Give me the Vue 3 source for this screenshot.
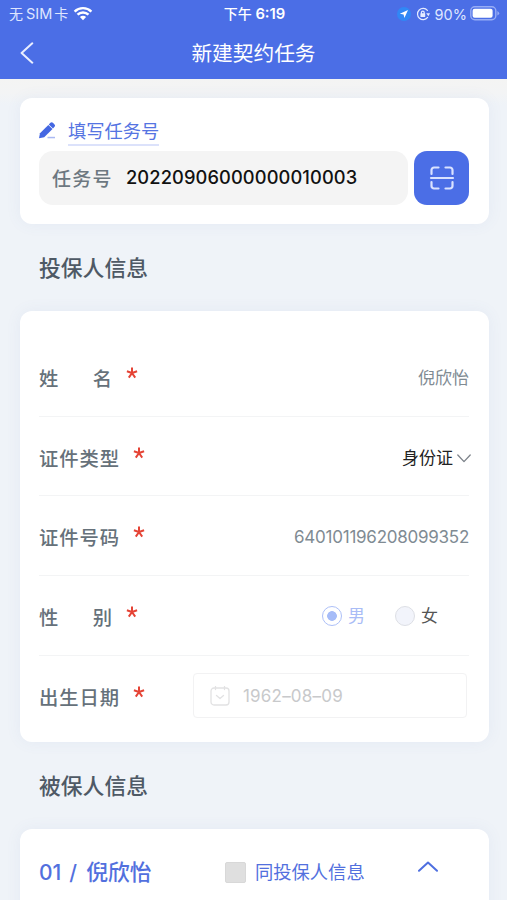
<template>
   <div class="page">
      <header class="header">
         <div class="status-bar">
            <div class="status-left">
               <span class="carrier">无<span class="sim">SIM</span>卡</span>
               <svg class="wifi" viewBox="0 0 20 15">
                  <path d="M1.6 5.6a12 12 0 0 1 16.8 0" />
                  <path d="M4.5 8.7a7.8 7.8 0 0 1 11 0" />
                  <path class="wifi-dot" d="M10 14.2 6.9 11.1a4.4 4.4 0 0 1 6.2 0z" />
               </svg>
            </div>
            <div class="status-time">下午 <span class="clock">6:19</span></div>
            <div class="status-right">
               <svg class="location" viewBox="0 0 14 14">
                  <circle cx="7" cy="7" r="7" />
                  <path d="M11 3 2.9 6.7l3.7.7.8 3.7z" />
               </svg>
               <svg class="lock" viewBox="0 0 14 14">
                  <path class="ring" d="M11.4 3.4a5.6 5.6 0 1 0 .2 7" />
                  <path d="M10.2 6.2h3.8l-1.6 3z" />
                  <rect x="4.4" y="6.2" width="4.8" height="3.8" rx=".6" />
                  <path class="ring" d="M5.4 6.5v-1a1.4 1.4 0 0 1 2.8 0v1" />
               </svg>
               <span class="percent">90%</span>
               <svg class="battery" viewBox="0 0 30 15">
                  <rect class="case" x=".8" y=".8" width="25" height="13" rx="4" />
                  <rect class="level" x="2.6" y="2.8" width="20" height="9" rx="2" />
                  <path class="tip" d="M27.4 5q3.6 2.3 0 4.6z" />
               </svg>
            </div>
         </div>
         <div class="nav-bar">
            <svg class="back" viewBox="0 0 14 22">
               <path d="M12.3 1.3 1.6 11l10.7 9.7" />
            </svg>
            <h1 class="nav-title">新建契约任务</h1>
         </div>
      </header>

      <main class="content">
         <section class="card task-card">
            <div class="task-link">
               <svg class="pencil" viewBox="0 0 17 17">
                  <path d="M0 16.3 1 11.2 9.3 2.9l4.2 4.2-8.3 8.2z" />
                  <path d="m9.8 2.4 1.6-1.6c.8-.8 1.7-.8 2.5 0l1.6 1.6c.7.7.7 1.6 0 2.3L14 6.500z" />
                  <rect class="pencil-line" x="8.5" y="14.8" width="7.5" height="1.5" />
               </svg>
               <span class="task-link-text">填写任务号</span>
            </div>
            <div class="task-row">
               <div class="task-input">
                  <span class="task-label">任务号</span>
                  <span class="task-value">{{ taskNo }}</span>
               </div>
               <button class="scan" type="button">
                  <svg viewBox="0 0 26 26">
                     <path d="M2.5 9V5A2.5 2.5 0 0 1 5 2.5h4.5M16.500 2.5H21A2.5 2.5 0 0 1 23.5 5v4" />
                     <path d="M2.5 17v4A2.5 2.5 0 0 0 5 23.5h4.5M16.500 23.5H21a2.5 2.5 0 0 0 2.5-2.5v-4" />
                     <path d="M2 13h22" />
                  </svg>
               </button>
            </div>
         </section>

         <h2 class="section-title">投保人信息</h2>

         <section class="card form-card">
            <div v-for="item in fields" :key="item.key" class="form-row">
               <div class="form-label" :class="{ spread: item.label.length === 2 }">
                  <span v-for="char in item.label" :key="char">{{ char }}</span>
               </div>
               <svg class="required" viewBox="0 0 12 12">
                  <path d="M6 6V.6M6 6 .9 4.3M6 6l5.1-1.7M6 6l-3.2 4.6M6 6l3.2 4.6" />
               </svg>

               <div v-if="item.type === 'text'" class="form-value" :class="item.key">{{ item.value }}</div>

               <div v-else-if="item.type === 'select'" class="form-select">
                  {{ item.value }}
                  <svg viewBox="0 0 14 9">
                     <path d="m.8 1 6.2 6.6L13.2 1" />
                  </svg>
               </div>

               <div v-else-if="item.type === 'radio'" class="form-radios">
                  <label
                     v-for="option in item.options"
                     :key="option"
                     class="radio"
                     :class="{ checked: option === item.value }"
                  >
                     <span class="radio-icon"></span>{{ option }}
                  </label>
               </div>

               <div v-else class="form-date">
                  <svg viewBox="0 0 20 20">
                     <rect x="1" y="2" width="18" height="17" rx="3" />
                     <path d="M5.5.5v3M14.5.5v3M6.5 9.5l3.5 3 3.5-3" />
                  </svg>
                  <span>{{ item.value }}</span>
               </div>
            </div>
         </section>

         <h2 class="section-title">被保人信息</h2>

         <section class="card insured-card">
            <div class="insured-name"><span class="insured-index">01 /</span>倪欣怡</div>
            <span class="checkbox"></span>
            <span class="same-text">同投保人信息</span>
            <svg class="collapse" viewBox="0 0 20 11">
               <path d="m1 9.8 9-8.3 9 8.3" />
            </svg>
         </section>
      </main>
   </div>
</template>

<script setup>
import { ref } from "vue";

const taskNo = ref("20220906000000010003");

const fields = ref([
   { key: "name", label: "姓名", type: "text", value: "倪欣怡" },
   { key: "id-type", label: "证件类型", type: "select", value: "身份证" },
   { key: "id-number", label: "证件号码", type: "text", value: "640101196208099352" },
   { key: "gender", label: "性别", type: "radio", value: "男", options: ["男", "女"] },
   { key: "birthday", label: "出生日期", type: "date", value: "1962–08–09" },
]);
</script>

<style>
body {
   overflow: hidden;
   background-color: #eff3f8;
}
</style>

<style scoped>
.page {
   height: 900px;
   overflow: hidden;
   background-color: #eff3f8;
   font-family: "Inter", "Noto Sans CJK SC", sans-serif;
}

svg {
   display: block;
   flex-shrink: 0;
   fill: none;
   stroke-linecap: round;
   stroke-linejoin: round;
}

.header {
   height: 79px;
   background-color: #4b6ee6;
   color: #fff;
}

.status-bar {
   height: 27px;
   display: grid;
   grid-template-columns: 1fr auto 1fr;
   align-items: center;
   padding: 0 7px 0 9px;
   font-size: 14px;
   line-height: 27px;
}

.status-left,
.status-right {
   display: flex;
   align-items: center;
   color: #dfe6ff;
}

.status-right {
   justify-content: flex-end;
}

.carrier {
   margin-top: -1px;
}

.sim {
   margin: 0 2px 0 3px;
   font-size: 14.5px;
}

.wifi {
   width: 20px;
   height: 15px;
   margin: -2px 0 0 5px;
   stroke: #fff;
   stroke-width: 2.4;
   stroke-linecap: butt;
}

.wifi-dot {
   fill: #fff;
   stroke: none;
}

.status-time {
   font-weight: 500;
}

.clock {
   font-size: 14.8px;
   font-weight: 600;
}

.location {
   width: 14px;
   height: 14px;
   margin-right: 5px;
}

.location circle {
   fill: #3187f5;
}

.location path {
   fill: #fff;
}

.lock {
   width: 14px;
   height: 14px;
   margin-right: 5px;
   fill: #e6ebff;
}

.ring {
   fill: none;
   stroke: #e6ebff;
   stroke-width: 1.2;
}

.percent {
   font-size: 14.5px;
}

.battery {
   width: 30px;
   height: 15px;
   margin: -1px 0 0 3px;
}

.case {
   stroke: #98adf5;
   stroke-width: 1.4;
}

.level {
   fill: #fff;
}

.tip {
   fill: #98adf5;
}

.nav-bar {
   height: 52px;
   display: grid;
   grid-template-columns: 1fr auto 1fr;
   align-items: center;
   padding: 0 20px;
}

.back {
   width: 14px;
   height: 22px;
   stroke: #e9eeff;
   stroke-width: 2;
}

.nav-title {
   margin: 0;
   padding-top: 1px;
   font-size: 20.7px;
   line-height: 51px;
   font-weight: 400;
}

.content {
   padding: 19px 18px 0 20px;
   background: linear-gradient(#f4f4f3 0, #f3f4f5 14px, #eff3f8 26px);
}

.card {
   background-color: #fff;
   border-radius: 12px;
   box-shadow: 0 0 16px rgba(90, 110, 180, 0.07);
}

.task-card {
   height: 126px;
   box-sizing: border-box;
   padding: 20px 20px 0 19px;
}

.task-link {
   display: flex;
   height: 33px;
   color: #5574e2;
}

.pencil {
   width: 17px;
   height: 17px;
   margin: 4px 12px 0 0;
   fill: #4467e2;
}

.pencil-line {
   fill: #aab9f3;
}

.task-link-text {
   height: 28px;
   box-sizing: border-box;
   border-bottom: 2px solid #dce2fb;
   font-size: 18.3px;
   line-height: 27px;
}

.task-row {
   display: flex;
   gap: 6px;
}

.task-input {
   flex: 1;
   height: 54px;
   display: flex;
   align-items: center;
   padding-left: 13px;
   border-radius: 14px;
   background-color: #f4f4f4;
}

.task-label {
   width: 74px;
   margin-top: -2px;
   color: #6d7880;
   font-size: 19px;
   font-weight: 500;
   letter-spacing: 1.2px;
   white-space: nowrap;
}

.task-value {
   margin-top: -2px;
   color: #111;
   font-size: 18.3px;
   font-weight: 500;
   letter-spacing: 0.1px;
}

.scan {
   width: 55px;
   height: 54px;
   display: flex;
   align-items: center;
   justify-content: center;
   padding: 0;
   border: none;
   border-radius: 13px;
   background-color: #4b6ee6;
}

.scan svg {
   width: 26px;
   height: 26px;
   stroke: #d9e2ff;
   stroke-width: 2.2;
}

.section-title {
   height: 87px;
   box-sizing: border-box;
   margin: 0;
   padding: 1px 0 0 19px;
   color: #4e5965;
   font-size: 21.8px;
   line-height: 87px;
   font-weight: 500;
}

.form-card {
   height: 431px;
   box-sizing: border-box;
   padding: 26px 20px 0 19px;
}

.form-row {
   height: 79.7px;
   box-sizing: border-box;
   display: flex;
   align-items: center;
   border-bottom: 1px solid #f3f4f5;
}

.form-row:last-child {
   border-bottom: none;
}

.form-label {
   width: 80px;
   display: flex;
   justify-content: space-between;
   margin-right: 14px;
   padding-top: 5px;
   color: #66717a;
   font-size: 19.3px;
   font-weight: 500;
   line-height: 28px;
}

.form-label.spread {
   width: 73px;
}

.required {
   width: 12px;
   height: 12px;
   margin-top: -7px;
   stroke: #e54335;
   stroke-width: 2;
   stroke-linecap: butt;
}

.form-value {
   margin-left: auto;
   padding-top: 1px;
   color: #808b93;
   font-size: 17px;
}

.id-number {
   padding-top: 2px;
   letter-spacing: -0.25px;
}

.form-select {
   display: flex;
   align-items: center;
   gap: 4px;
   margin: 0 -2px 0 auto;
   color: #222;
   font-size: 17px;
}

.form-select svg {
   width: 14px;
   height: 9px;
   margin-top: 4px;
   stroke: #7d838a;
   stroke-width: 1.3;
}

.form-radios {
   display: flex;
   gap: 30px;
   margin: 1px 31px 0 auto;
}

.radio {
   display: flex;
   align-items: center;
   gap: 6px;
   color: #555;
   font-size: 17px;
   line-height: 22px;
}

.radio-icon {
   width: 20px;
   height: 20px;
   box-sizing: border-box;
   border: 1.5px solid #dddfe5;
   border-radius: 50%;
   background-color: #f2f4fb;
}

.radio.checked {
   color: #a9bcf6;
}

.checked .radio-icon {
   border-color: #adc0f8;
   background: radial-gradient(circle, #a6bcf8 4.5px, #fff 5.2px);
}

.form-date {
   width: 274px;
   height: 45px;
   box-sizing: border-box;
   display: flex;
   align-items: center;
   gap: 13px;
   margin: 0 2px 0 auto;
   padding-left: 16px;
   border: 1px solid #f2f2f3;
   border-radius: 4px;
   color: #c8c9cb;
   font-size: 17px;
   letter-spacing: 0.2px;
}

.form-date svg {
   width: 20px;
   height: 20px;
   stroke: #e2e2e3;
   stroke-width: 1.3;
}

.insured-card {
   height: 120px;
   box-sizing: border-box;
   display: flex;
   align-items: flex-start;
   padding: 27px 51px 0 19px;
   color: #5270de;
   line-height: 32px;
}

.insured-name {
   width: 186px;
   font-size: 21.8px;
   font-weight: 500;
   white-space: nowrap;
}

.insured-index {
   margin-right: 9px;
   font-size: 21px;
   word-spacing: 2.5px;
}

.checkbox {
   width: 21px;
   height: 21px;
   margin: 6px 9px 0 0;
   border: 1px solid #d8d8d8;
   box-sizing: border-box;
   border-radius: 2px;
   background-color: #dfdfdf;
}

.same-text {
   font-size: 18.3px;
}

.collapse {
   width: 20px;
   height: 11px;
   margin: 5px 0 0 auto;
   stroke: #4e6fe0;
   stroke-width: 2;
}
</style>
